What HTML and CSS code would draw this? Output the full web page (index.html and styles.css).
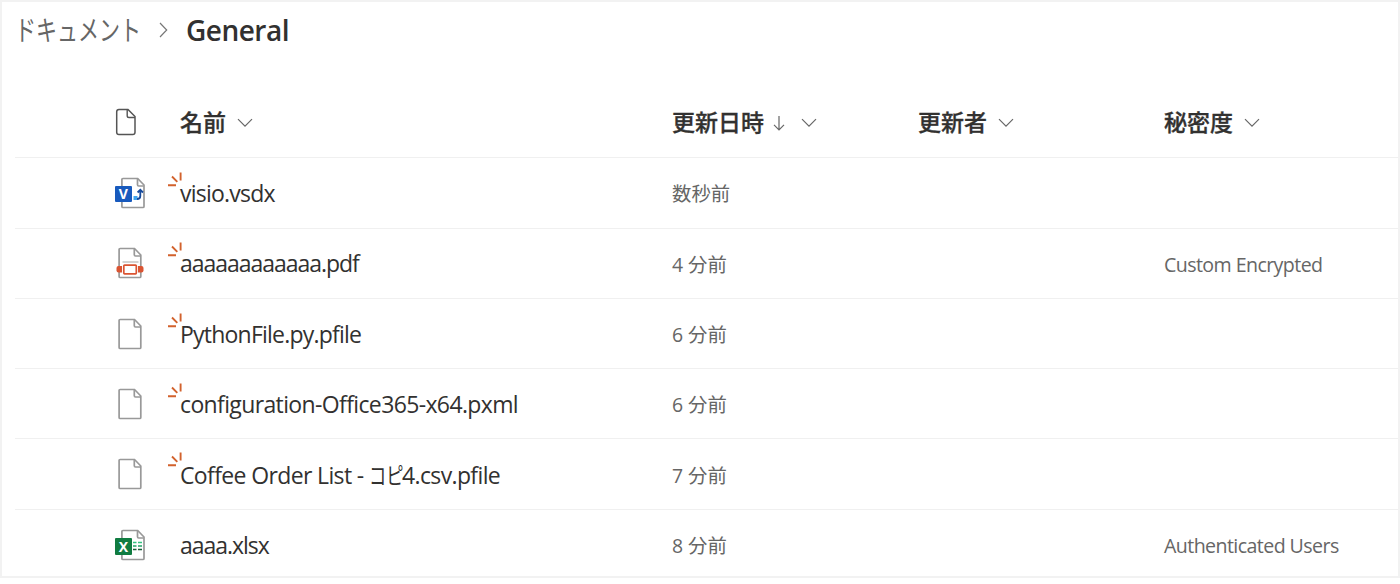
FILE: index.html
```html
<!doctype html>
<html lang="ja">
<head>
	<meta charset="UTF-8">
	<title>General</title>
	<link rel="stylesheet" href="styles.css">
</head>
<body>
	<svg class="defs" width="0" height="0">
		<symbol id="down" viewBox="0 0 16 10"><path d="M1 1.2l7 7 7-7" fill="none" stroke="#666" stroke-width="1.2"/></symbol>
		<symbol id="page" viewBox="0 0 32 32">
			<path d="M6.2 1.500h14.300l6.300 6.500v21.400q0 1.100-1.100 1.100H6.200q-1.100 0-1.100-1.100V2.600Q5.100 1.500 6.200 1.500z" fill="#fff" stroke="#999" stroke-width="1.7"/>
			<path d="M20.300 1.800v6q0 1.200 1.200 1.200h5" fill="none" stroke="#999" stroke-width="1.7"/>
		</symbol>
		<symbol id="page-right" viewBox="0 0 32 32">
			<path d="M9 1.500h14.700l6.300 6.500v21.400q0 1.100-1.100 1.100H9q-1.100 0-1.100-1.100V2.600Q7.900 1.500 9 1.500z" fill="#fff" stroke="#999" stroke-width="1.7"/>
			<path d="M23.500 1.800v6q0 1.200 1.200 1.200h5" fill="none" stroke="#999" stroke-width="1.7"/>
		</symbol>
		<symbol id="new" viewBox="0 0 14 15"><path d="M0 13.200h8M4 4.500l5.300 5.300M12.600.5v8" fill="none" stroke="#d2622d" stroke-width="1.900"/></symbol>
	</svg>
	<div class="container">
		<div class="path">
			<span class="root"><span class="kana">ドキュメント</span></span>
			<svg class="sep" width="9" height="16" viewBox="0 0 9 16"><path d="M1 1l6.700 7L1 15" fill="none" stroke="#777" stroke-width="1.2"/></svg>
			<span class="current">General</span>
		</div>
		<div class="list">
			<div class="row head">
				<div class="icon"><svg class="doc" width="22" height="28" viewBox="0 0 22 28"><path d="M4 1.5h9l7 7v15.7q0 2.300-2.300 2.300H4q-2.300 0-2.300-2.300V3.800Q1.700 1.500 4 1.500z" fill="none" stroke="#555" stroke-width="1.500"/><path d="M12.200 1.500v6.200q0 1.800 1.800 1.800h6" fill="none" stroke="#555" stroke-width="1.400"/></svg></div>
				<div class="cell">名前<svg class="down"><use href="#down"/></svg></div>
				<div class="cell">更新日時<svg class="sort" viewBox="0 0 12 16"><path d="M6 1v13.500M1 9.800l5 5 5-5" fill="none" stroke="#666" stroke-width="1.2"/></svg><svg class="down"><use href="#down"/></svg></div>
				<div class="cell">更新者<svg class="down"><use href="#down"/></svg></div>
				<div class="cell">秘密度<svg class="down"><use href="#down"/></svg></div>
			</div>
			<div class="row">
				<div class="icon"><svg width="32" height="32" viewBox="0 0 32 32"><use href="#page-right"/><rect x="1" y="9" width="17" height="16" rx="1" fill="#185abd"/><text class="letter" x="9.400" y="21.800">V</text><path d="M19.500 19h4v4h-4z" fill="#41a5ee"/><path d="M23 22q3.300 0 3.300-3v-5M23.600 15.500l2.700-2.700 2.700 2.700" fill="none" stroke="#174a9c" stroke-width="1.800"/></svg></div>
				<div class="name mid"><svg class="new"><use href="#new"/></svg>visio.vsdx</div>
				<div class="text">数秒前</div>
				<div></div>
				<div></div>
			</div>
			<div class="row">
				<div class="icon"><svg width="32" height="32" viewBox="0 0 32 32"><use href="#page"/><path d="M8.500 15h16" stroke="#c5c5c5" stroke-width="1.500"/><rect x="2.500" y="19" width="27" height="6.500" rx="2" fill="#da5432"/><path d="M8 16.500h16v12H8z" fill="#fff"/><rect x="9.800" y="18.200" width="12.500" height="8.600" rx=".8" fill="#fff" stroke="#da5432" stroke-width="1.700"/></svg></div>
				<div class="name tight"><svg class="new"><use href="#new"/></svg>aaaaaaaaaaaa.pdf</div>
				<div class="text">4 分前</div>
				<div></div>
				<div class="text label">Custom Encrypted</div>
			</div>
			<div class="row">
				<div class="icon"><svg width="32" height="32"><use href="#page"/></svg></div>
				<div class="name mid"><svg class="new"><use href="#new"/></svg>PythonFile.py.pfile</div>
				<div class="text">6 分前</div>
				<div></div>
				<div></div>
			</div>
			<div class="row">
				<div class="icon"><svg width="32" height="32"><use href="#page"/></svg></div>
				<div class="name"><svg class="new"><use href="#new"/></svg>configuration-Office365-x64.pxml</div>
				<div class="text">6 分前</div>
				<div></div>
				<div></div>
			</div>
			<div class="row">
				<div class="icon"><svg width="32" height="32"><use href="#page"/></svg></div>
				<div class="name"><svg class="new"><use href="#new"/></svg>Coffee Order List - <span class="copy"><span class="kana">コピ</span></span>4.csv.pfile</div>
				<div class="text">7 分前</div>
				<div></div>
				<div></div>
			</div>
			<div class="row">
				<div class="icon"><svg width="32" height="32" viewBox="0 0 32 32"><use href="#page-right"/><rect x="1" y="9" width="17" height="17" rx="1" fill="#107c41"/><text class="letter" x="9.400" y="22.500">X</text><path d="M19 13.500h3.500M24 13.500h4" stroke="#33c481" stroke-width="1.600"/><path d="M19 17h3.500M24 17h4" stroke="#21a366" stroke-width="1.600"/><path d="M19 20.500h3.500M24 20.500h4" stroke="#185c37" stroke-width="1.600"/></svg></div>
				<div class="name tight">aaaa.xlsx</div>
				<div class="text">8 分前</div>
				<div></div>
				<div class="text label">Authenticated Users</div>
			</div>
		</div>
		<div class="gap"></div>
	</div>
</body>
</html>
```

FILE: styles.css
```css
*{
	padding:0;
	margin:0;
	box-sizing: border-box;
}
body{
	background: #fff;
	font-family: "Open Sans","Noto Sans CJK JP",sans-serif;
	color:#323130;
	overflow: hidden;
}
svg{
	display: block;
	flex: none;
}
.defs{
	position: absolute;
}
.container{
	position: relative;
	width:1400px;
	height:578px;
	border:2px solid #f2f2f2;
	overflow: hidden;
}
.path{
	display: flex;
	align-items: center;
	height:56px;
	padding-left:13px;
	white-space: nowrap;
}
.root{
	width:126px;
	font-size: 28px;
	color:#666;
}
.root .kana{
	margin-top:-2px;
}
.kana{
	display: inline-block;
	font-family: "Noto Sans CJK JP",sans-serif;
	font-weight: 400;
	letter-spacing: 0;
	transform: scaleX(.75);
	transform-origin: 0 50%;
}
.sep{
	margin:0 18px;
}
.current{
	font-size: 28px;
	font-weight: 600;
	letter-spacing: -.5px;
}
.list{
	margin-top:28px;
	margin-left:13px;
}
.row{
	display: grid;
	grid-template-columns: 66px 492px 246px 246px 1fr;
	align-items: center;
	height:70.3px;
	padding-left:99px;
	border-bottom:1px solid #f0f0f0;
	white-space: nowrap;
}
.row:last-child{
	border-bottom:0;
}
.head{
	height:72.3px;
}
.doc{
	margin-left:1px;
}
.cell{
	display: flex;
	align-items: center;
	margin-top:-2px;
	font-size: 23px;
	font-weight: 600;
	font-family: "Noto Sans CJK JP",sans-serif;
	font-weight: 500;
	-webkit-text-stroke: .3px #323130;
}
.down{
	width:16px;
	height:10px;
	margin-top:4px;
	margin-left:11px;
}
.sort{
	width:12px;
	height:16px;
	margin-top:5px;
	margin-left:9px;
}
.sort + .down{
	margin-left:16px;
}
.name{
	position: relative;
	font-size: 23px;
	letter-spacing: -.63px;
}
.mid{
	letter-spacing: -.78px;
}
.tight{
	letter-spacing: -1.040px;
}
.new{
	position: absolute;
	left:-12px;
	top:-5px;
	width:14px;
	height:15px;
}
.text{
	font-size: 19.400px;
	color:#666;
}
.label{
	margin-top:2px;
	font-size: 19.600px;
	letter-spacing: -.58px;
}
.copy{
	display: inline-block;
	width:33px;
}
.letter{
	font:700 14px "Open Sans",sans-serif;
	fill:#fff;
	text-anchor: middle;
}
/* opening in the bottom edge of the frame */
.gap{
	position: absolute;
	left:894px;
	bottom:-2px;
	width:153px;
	height:2px;
	background: #fff;
}
```
